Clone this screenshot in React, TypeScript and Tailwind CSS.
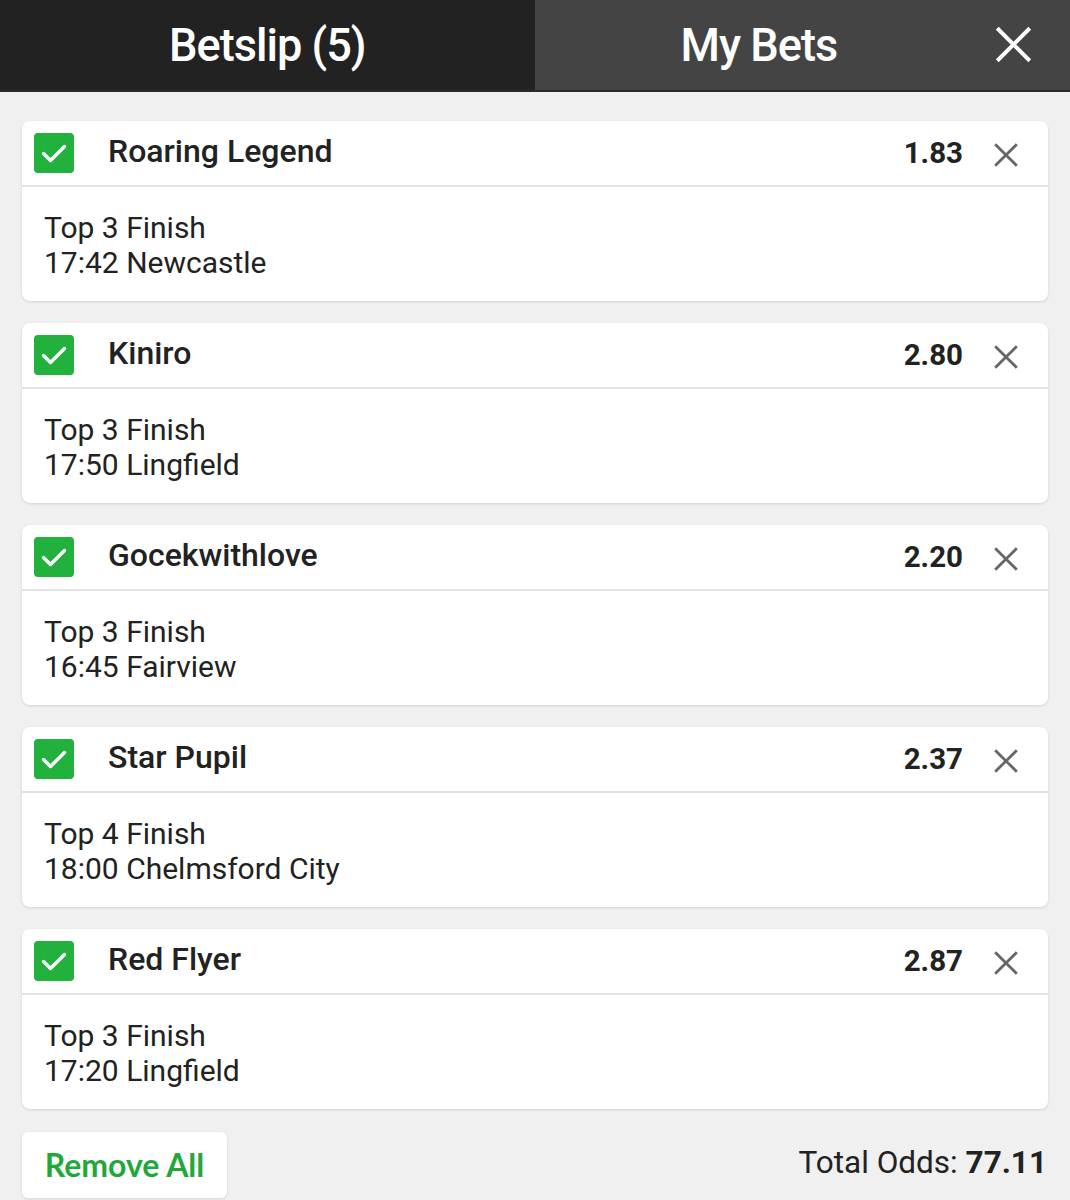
import React from "react";

const bets = [
  { name: "Roaring Legend", odds: "1.83", market: "Top 3 Finish", race: "17:42 Newcastle" },
  { name: "Kiniro", odds: "2.80", market: "Top 3 Finish", race: "17:50 Lingfield" },
  { name: "Gocekwithlove", odds: "2.20", market: "Top 3 Finish", race: "16:45 Fairview" },
  { name: "Star Pupil", odds: "2.37", market: "Top 4 Finish", race: "18:00 Chelmsford City" },
  { name: "Red Flyer", odds: "2.87", market: "Top 3 Finish", race: "17:20 Lingfield" },
];

function Check() {
  return (
    <div className="w-[40px] h-[40px] rounded-[4px] bg-[#21b13c] flex items-center justify-center shrink-0">
      <svg width="30" height="30" viewBox="0 0 30 30" fill="none">
        <path d="M4.5 15.5 L11.5 22.5 L25.5 8.5" stroke="white" strokeWidth="3.4" strokeLinecap="round" strokeLinejoin="round" />
      </svg>
    </div>
  );
}

function XIcon({ size, color, stroke }: { size: number; color: string; stroke: number }) {
  return (
    <svg width={size} height={size} viewBox="0 0 24 24" fill="none">
      <path d="M2 2 L22 22 M22 2 L2 22" stroke={color} strokeWidth={stroke} />
    </svg>
  );
}

export default function App() {
  return (
    <div
      className="w-[1070px] h-[1200px] overflow-hidden bg-[#f0f0f0] text-[#222]"
      style={{ fontFamily: "Roboto, 'Noto Sans', sans-serif" }}
    >
      <div className="flex h-[92px] border-b-[2px] border-[#2a2a2a]">
        <div className="w-[535px] bg-[#222222] flex items-center justify-center">
          <span className="text-white text-[46px] font-medium tracking-[-1px] scale-x-[0.98] inline-block">Betslip (5)</span>
        </div>
        <div className="flex-1 bg-[#444444] flex items-center relative">
          <span className="ml-[144px] text-white text-[46px] font-medium tracking-[-1px] scale-x-[0.98] inline-block">My Bets</span>
          <div className="absolute right-[37px] top-[25px]">
            <XIcon size={39} color="#ffffff" stroke={2.4} />
          </div>
        </div>
      </div>

      <div className="px-[22px] pt-[29px] flex flex-col gap-[22px]">
        {bets.map((b) => (
          <div
            key={b.name}
            className="bg-white rounded-[8px] h-[180px] shadow-[0_1px_3px_rgba(0,0,0,0.12)] flex flex-col"
          >
            <div className="h-[66px] border-b-[2px] border-[#e2e2e2] flex items-center pl-[12px] pr-[29px]">
              <Check />
              <span className="ml-[34px] text-[32px] font-medium mt-[-4px]">{b.name}</span>
              <span className="ml-auto text-[29.5px] font-bold mr-[1px]">{b.odds}</span>
              <div className="ml-[29px] mt-[4px]">
                <XIcon size={26} color="#666666" stroke={2.6} />
              </div>
            </div>
            <div className="pl-[22px] pt-[23px] text-[30px] leading-[35px]">
              <div>{b.market}</div>
              <div>{b.race}</div>
            </div>
          </div>
        ))}
        <div className="flex items-start justify-between mt-[1px]">
          <button
            className="bg-white rounded-[6px] w-[205px] h-[66px] shadow-[0_1px_3px_rgba(0,0,0,0.12)] text-[#22a83a] text-[32px] font-bold flex items-center justify-center"
            style={{ fontFamily: "Lato, Roboto, sans-serif" }}
          >
            Remove All
          </button>
          <div className="text-[31.5px] mt-[7px] pr-[1px]">
            Total Odds: <span className="font-bold">77.11</span>
          </div>
        </div>
      </div>
    </div>
  );
}
